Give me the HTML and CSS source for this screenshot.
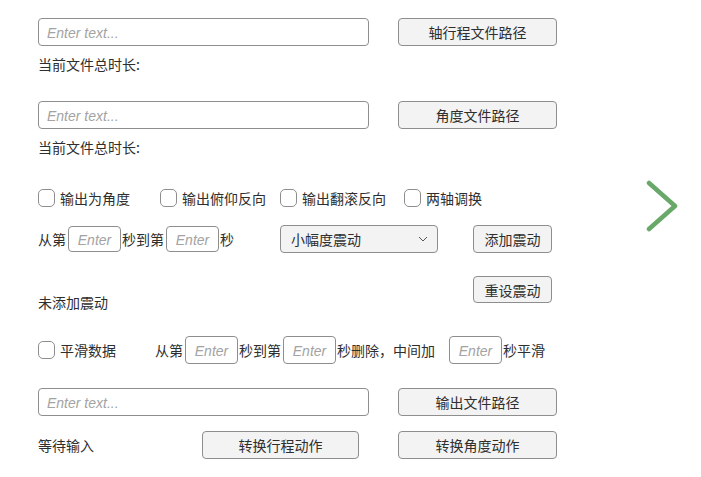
FILE: index.html
```html
<!DOCTYPE html>
<html lang="zh-CN">
<head>
  <meta charset="UTF-8">
  <title>动作转换</title>
  <link rel="stylesheet" href="styles.css">
</head>
<body>
  <div class="page">
    <main class="form">
      <!-- 轴行程文件 -->
      <div class="row file-row">
        <input class="path" type="text" placeholder="Enter text...">
        <button class="btn wide">轴行程文件路径</button>
      </div>
      <p class="duration">当前文件总时长:</p>

      <!-- 角度文件 -->
      <div class="row file-row second">
        <input class="path" type="text" placeholder="Enter text...">
        <button class="btn wide">角度文件路径</button>
      </div>
      <p class="duration">当前文件总时长:</p>

      <!-- 选项 -->
      <div class="row options">
        <label class="check"><input type="checkbox">输出为角度</label>
        <label class="check"><input type="checkbox">输出俯仰反向</label>
        <label class="check"><input type="checkbox">输出翻滚反向</label>
        <label class="check"><input type="checkbox">两轴调换</label>
      </div>

      <!-- 震动 -->
      <div class="row range-row">
        <span class="word">从第</span>
        <input class="sec" type="text" placeholder="Enter">
        <span class="word">秒到第</span>
        <input class="sec" type="text" placeholder="Enter">
        <span class="word">秒</span>
        <div class="select">
          <span>小幅度震动</span>
          <svg width="10" height="6" viewBox="0 0 10 6"><path d="M1 1 L5 5 L9 1" fill="none" stroke="#555" stroke-width="1"/></svg>
        </div>
        <button class="btn short add">添加震动</button>
      </div>
      <div class="row reset-row">
        <span class="status">未添加震动</span>
        <button class="btn short reset">重设震动</button>
      </div>

      <!-- 平滑 -->
      <div class="row smooth-row">
        <label class="check"><input type="checkbox">平滑数据</label>
        <span class="word from">从第</span>
        <input class="sec tall" type="text" placeholder="Enter">
        <span class="word">秒到第</span>
        <input class="sec tall" type="text" placeholder="Enter">
        <span class="word">秒删除，中间加</span>
        <input class="sec tall gap" type="text" placeholder="Enter">
        <span class="word">秒平滑</span>
      </div>

      <!-- 输出 -->
      <div class="row file-row output">
        <input class="path" type="text" placeholder="Enter text...">
        <button class="btn wide">输出文件路径</button>
      </div>
      <div class="row convert-row">
        <span class="status">等待输入</span>
        <button class="btn wide convert">转换行程动作</button>
        <button class="btn wide">转换角度动作</button>
      </div>
    </main>

    <aside class="next">
      <svg width="34" height="52" viewBox="0 0 34 52">
        <path d="M3 3 L29 26 L3 49" fill="none" stroke="#68a868" stroke-width="4.5" stroke-linecap="round" stroke-linejoin="round"/>
      </svg>
    </aside>
  </div>
</body>
</html>
```

FILE: styles.css
```css
body {
  margin: 0;
  background: #ffffff;
  color: #2e2e2e;
  font-family: "Noto Sans CJK SC", "Liberation Sans", sans-serif;
  font-size: 14px;
}
.page {
  display: flex;
  padding: 18px 0 0 38px;
}
.form {
  flex: 0 0 608px;
}
.row {
  display: flex;
  align-items: center;
}
input,
button {
  font-family: inherit;
  font-size: 14px;
  color: #2e2e2e;
  box-sizing: border-box;
  margin: 0;
}
input::placeholder {
  color: #a3a3a3;
  font-family: "Liberation Sans", sans-serif;
  font-style: italic;
}
.path {
  width: 331px;
  height: 28px;
  padding: 0 8px;
  border: 1px solid #8e8e8e;
  border-radius: 4px;
  background: #ffffff;
}
.btn {
  height: 28px;
  border: 1px solid #8e8e8e;
  border-radius: 4px;
  background: #f3f3f3;
  padding: 0;
  line-height: 26px;
}
.btn.wide {
  width: 159px;
}
.btn.short {
  width: 79px;
}
.file-row .btn {
  margin-left: 29px;
}
.duration {
  margin: 8px 0 0;
  line-height: 20px;
}
.file-row.second {
  margin-top: 27px;
}

/* checkboxes */
.check {
  display: flex;
  align-items: center;
  line-height: 20px;
}
.check input {
  appearance: none;
  width: 17px;
  height: 18px;
  margin: 0 5px 0 0;
  border: 1px solid #8e8e8e;
  border-radius: 5px;
  background: #ffffff;
}
.options {
  display: grid;
  grid-template-columns: 122px 120px 124px auto;
  height: 20px;
  margin-top: 31px;
}

/* range + shake */
.range-row {
  height: 29px;
  margin-top: 16px;
}
.word {
  line-height: 20px;
}
.sec {
  width: 53px;
  height: 26px;
  margin: 0 1px 0 2px;
  border: 1px solid #8e8e8e;
  border-radius: 4px;
  text-align: center;
  background: #ffffff;
}
.sec.tall {
  height: 28px;
}
.select {
  display: flex;
  align-items: center;
  justify-content: space-between;
  box-sizing: border-box;
  width: 158px;
  height: 28px;
  margin-left: 46px;
  padding: 0 9px 0 10px;
  border: 1px solid #8e8e8e;
  border-radius: 4px;
  background: #f3f3f3;
}
.btn.add {
  margin-left: 35px;
}
.reset-row {
  align-items: flex-start;
  margin-top: 23px;
}
.status {
  line-height: 20px;
  margin-top: 16px;
}
.btn.reset {
  height: 27px;
  margin-left: 365px;
}

/* smoothing */
.smooth-row {
  margin-top: 24px;
}
.word.from {
  margin-left: 39px;
}
.sec.gap {
  margin-left: 14px;
}

/* output */
.file-row.output {
  margin-top: 24px;
}
.convert-row {
  margin-top: 15px;
}
.convert-row .status {
  margin-top: 0;
}
.btn.wide.convert {
  width: 157px;
  margin-left: 108px;
  margin-right: 39px;
}

.next {
  padding-top: 162px;
}
.next svg {
  display: block;
}
```
